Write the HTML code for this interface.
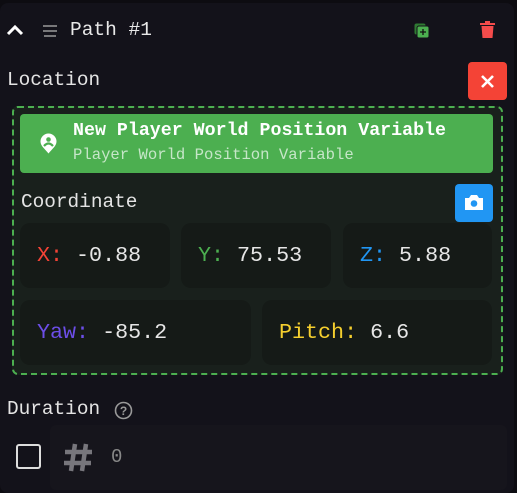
<!DOCTYPE html>
<html><head><style>
*{margin:0;padding:0;box-sizing:border-box}
body{width:517px;height:493px;background:#0d0c11;font-family:"Liberation Mono",monospace;color:#e6e6e6;position:relative;overflow:hidden}
.panel{position:absolute;left:0;top:3px;width:514px;height:490px;background:#13121a;border-radius:8px}
.a{position:absolute}
.lbl{font-size:19.4px;color:#e4e4e4}
.cell{position:absolute;background:#151a17;border-radius:10px;height:65px;font-size:21.7px;line-height:65px;padding-left:17px}
</style></head><body>
<div class="panel"></div>
<svg class="a" style="left:6px;top:24px" width="18" height="12" viewBox="0 0 18 12"><path d="M2 10 L9 3 L16 10" stroke="#fff" stroke-width="3" fill="none"/></svg>
<svg class="a" style="left:42px;top:24px" width="16" height="14"><path d="M1 2H15M1 7H15M2 12H14" stroke="#999" stroke-width="1.6"/></svg>
<div class="a" style="left:70px;top:19px;font-size:19.5px;color:#e8e8e8">Path #1</div>
<svg class="a" style="left:414px;top:23px" width="16" height="16"><rect x="0.5" y="0.5" width="11" height="11" rx="2" fill="#2f7a33"/><rect x="3" y="3" width="12" height="12" rx="2" fill="#4caf50" stroke="#13121a"/><path d="M9 6V12M6 9H12" stroke="#111" stroke-width="1.3"/></svg>
<svg class="a" style="left:480px;top:21px" width="15" height="18"><rect x="0" y="2" width="15" height="2" fill="#f44b4b"/><rect x="5" y="0" width="5" height="2" fill="#f44b4b"/><path d="M1.5 5H13.5L12.5 17H2.5Z" fill="#f44b4b"/></svg>
<div class="a lbl" style="left:7px;top:69px">Location</div>
<div class="a" style="left:468px;top:62px;width:39px;height:38px;background:#f44336;border-radius:4px"></div>
<svg class="a" style="left:480px;top:74px" width="15" height="15"><path d="M2 2L13 13M13 2L2 13" stroke="#fff" stroke-width="2.6"/></svg>
<div class="a" style="left:12px;top:106px;width:491px;height:269px;border:2.5px dashed #4caf50;border-radius:6px;background:#19201c"></div>
<div class="a" style="left:20px;top:114px;width:473px;height:59px;background:#4caf50;border-radius:4px"></div>
<svg class="a" style="left:40px;top:133px" width="17" height="21" viewBox="0 0 17 21"><path d="M8.5 0.5A8 8 0 0 1 16.5 8.5C16.5 13 12 16 8.5 20.5C5 16 0.5 13 0.5 8.5A8 8 0 0 1 8.5 0.5Z" fill="#fff"/><circle cx="8.5" cy="6.5" r="2.3" fill="#4caf50"/><path d="M4 13Q8.5 8 13 13" stroke="#4caf50" stroke-width="2.2" fill="none"/></svg>
<div class="a" style="left:73px;top:121px;font-size:18.3px;font-weight:bold;color:#fff">New Player World Position Variable</div>
<div class="a" style="left:73px;top:146px;font-size:15.6px;color:#c6e6c8">Player World Position Variable</div>
<div class="a lbl" style="left:21px;top:191px">Coordinate</div>
<div class="a" style="left:455px;top:184px;width:38px;height:38px;background:#2196f3;border-radius:4px"></div>
<svg class="a" style="left:464px;top:194px" width="20" height="17"><path d="M1 4H5L7 1H13L15 4H19V16H1Z" fill="#fff"/><circle cx="10" cy="9.5" r="3.3" fill="#2196f3"/></svg>
<div class="cell" style="left:20px;top:223px;width:150px"><span style="color:#f44336">X: </span>-0.88</div>
<div class="cell" style="left:181px;top:223px;width:150px"><span style="color:#4caf50">Y: </span>75.53</div>
<div class="cell" style="left:343px;top:223px;width:149px"><span style="color:#2196f3">Z: </span>5.88</div>
<div class="cell" style="left:20px;top:300px;width:231px"><span style="color:#6c4ee8">Yaw: </span>-85.2</div>
<div class="cell" style="left:262px;top:300px;width:230px"><span style="color:#f5cf2e">Pitch: </span>6.6</div>
<div class="a lbl" style="left:7px;top:398px">Duration</div>
<svg class="a" style="left:114px;top:401px" width="19" height="19"><circle cx="9.5" cy="9.5" r="8" stroke="#999" stroke-width="1.6" fill="none"/><text x="9.5" y="14" font-size="12" text-anchor="middle" fill="#999" font-family="Liberation Sans" font-weight="bold">?</text></svg>
<div class="a" style="left:50px;top:425px;width:457px;height:65px;background:#16151c;border-radius:6px"></div>
<div class="a" style="left:16px;top:444px;width:25px;height:25px;border:2.5px solid #ddd;border-radius:3px"></div>
<svg class="a" style="left:64px;top:443px" width="29" height="29" viewBox="0 0 29 29"><path d="M11 1L7 28M22 1L18 28M1 9H28M0 20H27" stroke="#77767c" stroke-width="4.5"/></svg>
<div class="a" style="left:111px;top:446px;font-size:19px;color:#888">0</div>
</body></html>
